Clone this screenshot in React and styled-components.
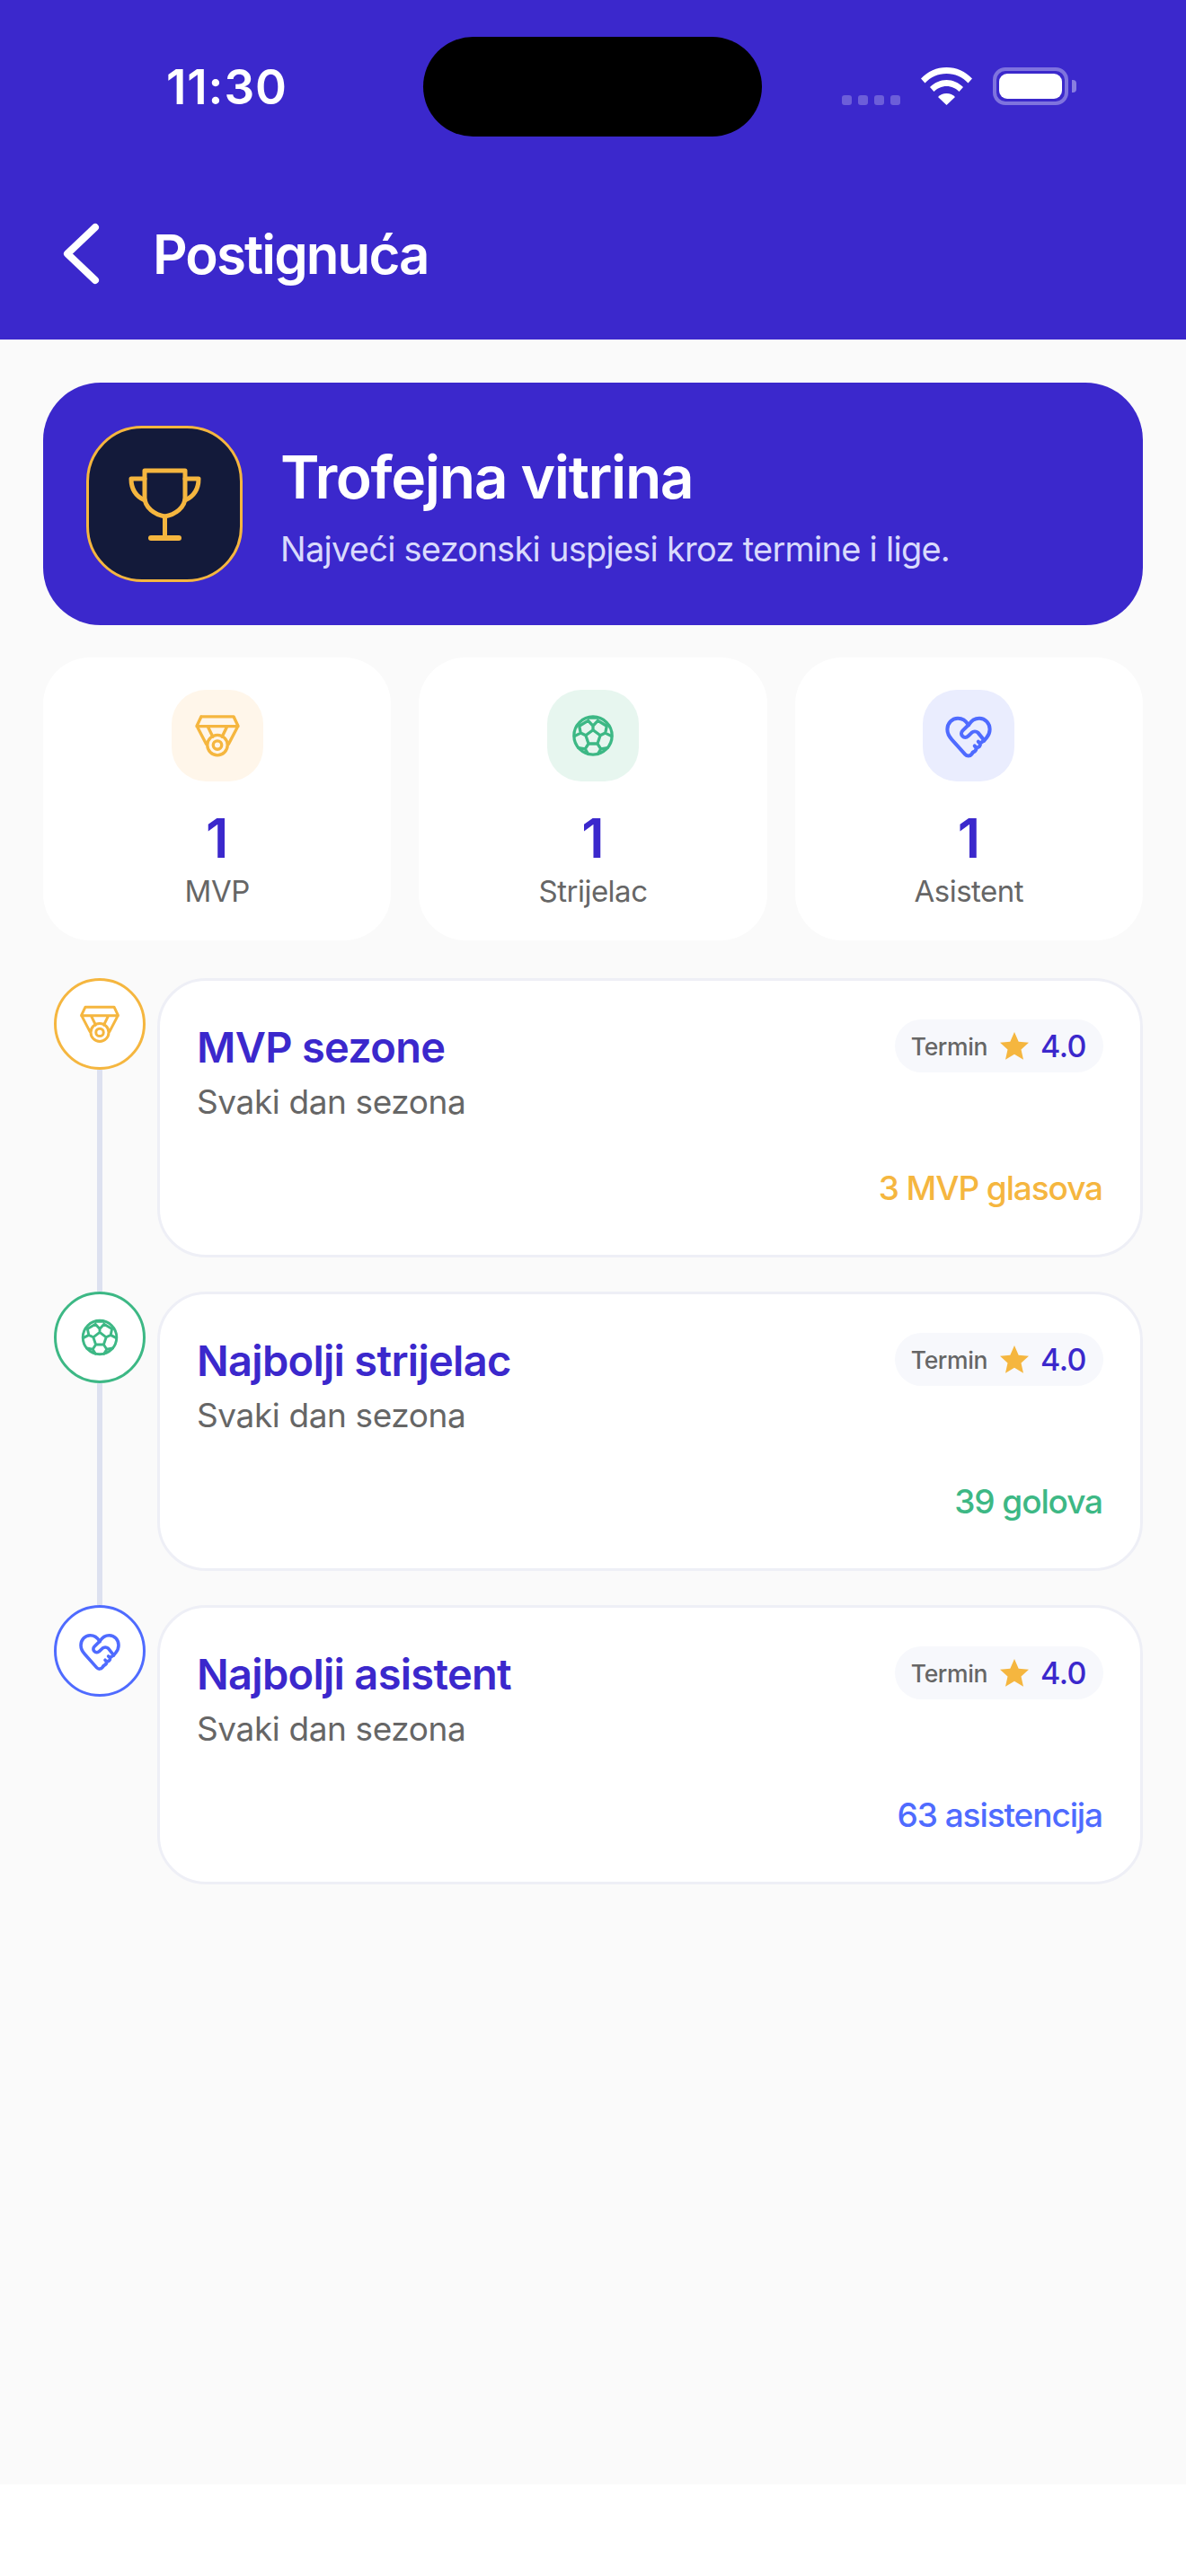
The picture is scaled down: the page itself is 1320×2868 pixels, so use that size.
import React from "react";
import styled, { createGlobalStyle } from "styled-components";

const FONT = `Inter, "Noto Sans", sans-serif`;
const INDIGO = "#3B28CC";
const AMBER = "#F5B63F";
const GREEN = "#3DB885";
const BLUE = "#4F6BFF";

const Global = createGlobalStyle`
  html, body { margin: 0; padding: 0; background: #fff; }
  * { box-sizing: border-box; }
`;

const Screen = styled.div`
  width: 1320px;
  height: 2868px;
  background: #fff;
  font-family: ${FONT};
  overflow: hidden;
`;
const Header = styled.header`
  height: 378px;
  background: ${INDIGO};
  padding-top: 41px;
`;
const StatusBar = styled.div`
  display: flex;
  align-items: flex-start;
  height: 111px;
  padding-left: 185px;
`;
const Clock = styled.div`
  width: 286px;
  margin-top: 29px;
  font-size: 53px;
  line-height: 54px;
  font-weight: 600;
  color: #fff;
  letter-spacing: 0.9px;
`;
const Island = styled.div`
  width: 377px;
  height: 111px;
  border-radius: 56px;
  background: #000;
`;
const StatusIcons = styled.div`
  display: flex;
  align-items: flex-end;
  margin: 34px 0 0 89px;
  height: 42px;
`;
const Dots = styled.div`
  display: flex;
  gap: 7px;
  margin-right: 23px;
`;
const Dot = styled.span`
  width: 11px;
  height: 11px;
  border-radius: 3px;
  background: rgba(255, 255, 255, 0.25);
`;
const Battery = styled.div`
  position: relative;
  width: 84px;
  height: 42px;
  margin-left: 23px;
  border: 4px solid rgba(255, 255, 255, 0.35);
  border-radius: 14px;
  padding: 3px;
  &::after {
    content: "";
    position: absolute;
    right: -13px;
    top: 10px;
    width: 5px;
    height: 14px;
    border-radius: 0 4px 4px 0;
    background: rgba(255, 255, 255, 0.4);
  }
`;
const BatteryFill = styled.div`
  width: 100%;
  height: 100%;
  border-radius: 9px;
  background: #fff;
`;
const NavRow = styled.div`
  display: flex;
  align-items: center;
  height: 70px;
  margin-top: 96px;
  padding-left: 70px;
  gap: 59px;
`;
const NavTitle = styled.h1`
  margin: 0;
  font-size: 60px;
  line-height: 70px;
  font-weight: 600;
  color: #fff;
  letter-spacing: -1.9px;
`;
const Main = styled.main`
  height: 2388px;
  background: #fafafa;
  padding: 48px 48px 0;
`;
const Hero = styled.section`
  display: flex;
  align-items: center;
  gap: 42px;
  height: 270px;
  padding-left: 48px;
  border-radius: 64px;
  background: ${INDIGO};
`;
const HeroIcon = styled.div`
  display: flex;
  align-items: center;
  justify-content: center;
  width: 174px;
  height: 174px;
  border-radius: 62px;
  border: 3px solid ${AMBER};
  background: #131a3a;
`;
const HeroTitle = styled.h2`
  margin: 4px 0 0;
  font-size: 66px;
  line-height: 78px;
  font-weight: 600;
  color: #fff;
  letter-spacing: -1.4px;
`;
const HeroSub = styled.p`
  margin: 18px 0 0;
  font-size: 38px;
  line-height: 46px;
  font-weight: 400;
  color: #d9dafc;
  letter-spacing: -0.75px;
`;
const Stats = styled.section`
  display: grid;
  grid-template-columns: repeat(3, 1fr);
  gap: 31px;
  margin-top: 36px;
`;
const StatCard = styled.div`
  display: flex;
  flex-direction: column;
  align-items: center;
  height: 315px;
  padding-top: 36px;
  border-radius: 52px;
  background: #fff;
`;
const StatTile = styled.div`
  display: flex;
  align-items: center;
  justify-content: center;
  width: 102px;
  height: 102px;
  border-radius: 38px;
  background: ${(p) => p.$bg};
  color: ${(p) => p.$color};
`;
const StatNumber = styled.div`
  margin-top: 27px;
  font-size: 60px;
  line-height: 72px;
  font-weight: 600;
  color: ${INDIGO};
`;
const StatLabel = styled.div`
  margin-top: 3px;
  font-size: 33px;
  line-height: 40px;
  color: #666;
  letter-spacing: -0.5px;
`;
const Timeline = styled.section`
  display: flex;
  flex-direction: column;
  margin-top: 42px;
`;
const Row = styled.div`
  display: flex;
  gap: 13px;
`;
const Rail = styled.div`
  display: flex;
  flex-direction: column;
  align-items: center;
  width: 102px;
  margin-left: 12px;
  flex: none;
`;
const Node = styled.div`
  display: flex;
  align-items: center;
  justify-content: center;
  flex: none;
  width: 102px;
  height: 102px;
  border-radius: 50%;
  border: 3px solid ${(p) => p.$color};
  background: #fff;
  color: ${(p) => p.$color};
`;
const RailLine = styled.div`
  flex: 1;
  width: 6px;
  background: #dde1f0;
`;
const Card = styled.article`
  flex: 1;
  display: flex;
  flex-direction: column;
  height: 311px;
  margin-bottom: ${(p) => (p.$last ? 0 : "38px")};
  padding: 42px 41px 0 41px;
  border: 3px solid #eeeff6;
  border-radius: 54px;
  background: #fff;
`;
const CardTop = styled.div`
  display: flex;
  justify-content: space-between;
  align-items: flex-start;
`;
const CardTitle = styled.h3`
  margin: 2px 0 0;
  font-size: 47px;
  line-height: 60px;
  font-weight: 600;
  color: ${INDIGO};
  letter-spacing: -0.7px;
`;
const CardSub = styled.p`
  margin: 8px 0 0;
  font-size: 37px;
  line-height: 46px;
  color: #666;
  letter-spacing: -0.4px;
`;
const Pill = styled.div`
  display: flex;
  align-items: center;
  height: 59px;
  margin-top: 1px;
  padding: 0 19px 0 18px;
  border-radius: 30px;
  background: #f7f8fc;
`;
const PillLabel = styled.span`
  font-size: 26.5px;
  font-weight: 500;
  color: #666;
  letter-spacing: -0.4px;
`;
const PillValue = styled.span`
  font-size: 34px;
  font-weight: 500;
  color: ${INDIGO};
  letter-spacing: -0.5px;
`;
const Star = styled.svg`
  width: 32px;
  height: 31px;
  margin: 0 13px 0 14px;
`;
const CardFoot = styled.div`
  margin-top: auto;
  margin-bottom: 51px;
  margin-right: 1px;
  text-align: right;
  font-size: 37px;
  line-height: 46px;
  font-weight: 500;
  color: ${(p) => p.$color};
  letter-spacing: -1.1px;
`;

const MedalIcon = ({ size }) => (
  <svg width={size} height={size} viewBox="0 0 24 24" fill="none" stroke="currentColor" strokeWidth="1.5" strokeLinejoin="round" strokeLinecap="round">
    <path d="M4 2.6h16l2.2 4.6-4.7 9M6.5 16.2 1.8 7.2 4 2.6M1.8 7.4h20.4M7.2 7.4l2.5 5.2M16.8 7.4l-2.500 5.2" />
    <circle cx="12" cy="16.7" r="5" />
    <circle cx="12" cy="16.7" r="2.1" />
  </svg>
);

const BallIcon = ({ size }) => (
  <svg width={size} height={size} viewBox="0 0 24 24" fill="none" stroke="currentColor" strokeWidth="1.45" strokeLinejoin="round" strokeLinecap="round">
    <circle cx="12" cy="12" r="9.4" />
    <path d="M12 9.2l3.6 2.7-1.4 4.1H9.8l-1.4-4.1zM12 9.2V7.2L9.6 4.6M12 7.2l2.4-2.6M9.8 3.2h4.4M15.6 11.9l2.5-1.2.7-3.4M18.1 10.7l3.1 1.6M8.4 11.9l-2.5-1.2-.7-3.4M5.9 10.7l-3.1 1.6M14.2 16l1.7 2.6-1.5 2.5M15.9 18.6l3.4-.6M9.8 16l-1.7 2.6 1.5 2.5M8.1 18.6l-3.4-.6M9.6 4.6l-4 2.4M14.4 4.6l4 2.4" />
  </svg>
);

const HeartIcon = ({ size }) => (
  <svg width={size} height={size} viewBox="0 0 24 24" fill="none" stroke="currentColor" strokeWidth="1.8" strokeLinejoin="round" strokeLinecap="round">
    <path d="M12 6.7C10.7 4.6 8.7 3.4 6.7 3.4 3.7 3.4 1.5 5.9 1.5 8.9c0 2 .9 3.6 2.2 5l6.6 7.4c.9 1 2.4 1 3.2-.1l.6-.8" />
    <path d="M12 6.7c1.3-2.1 3.3-3.3 5.3-3.3 3 0 5.2 2.5 5.2 5.500 0 1.7-.7 3.1-1.7 4.3l-1.2 1.3" />
    <path d="M12 6.7 9 9.6a1.9 1.9 0 0 0 2.7 2.7l1.8-1.7c.9-.8 2.3-.8 3.2 0l3.1 3.8" />
    <path d="M19.6 14.4l-1.9 1.5-.9-.9M17.7 15.9c.3 1.2-.6 2.1-1.9 2l-.8-.8M15.8 17.9c.2 1.100-.5 1.9-1.7 2.4" />
  </svg>
);

const Trophy = () => (
  <svg width="81" height="81" viewBox="0 0 81 81" fill="none" stroke={AMBER} strokeWidth="5" strokeLinejoin="round" strokeLinecap="round">
    <path d="M18 3h45v30c0 11-11 19-22.5 21C29 52 18 44 18 33z" />
    <path d="M40.5 54v24" />
    <path d="M25 78h31" strokeWidth="6" />
    <path d="M18 12H3c0 10 4 19 15 24M63 12h15c0 10-4 19-15 24" />
  </svg>
);

const ACHIEVEMENTS = [
  { title: "MVP sezone", foot: "3 MVP glasova", color: AMBER, Icon: MedalIcon },
  { title: "Najbolji strijelac", foot: "39 golova", color: GREEN, Icon: BallIcon },
  { title: "Najbolji asistent", foot: "63 asistencija", color: BLUE, Icon: HeartIcon },
];

const STATS = [
  { label: "MVP", color: AMBER, bg: "#FFF6EA", Icon: MedalIcon },
  { label: "Strijelac", color: GREEN, bg: "#E7F6EF", Icon: BallIcon },
  { label: "Asistent", color: BLUE, bg: "#EAEDFE", Icon: HeartIcon },
];

export default function App() {
  return (
    <Screen>
      <Global />
      <Header>
        <StatusBar>
          <Clock>11:30</Clock>
          <Island />
          <StatusIcons>
            <Dots>
              <Dot />
              <Dot />
              <Dot />
              <Dot />
            </Dots>
            <svg width="57" height="42" viewBox="0 0 57 42" fill="#fff">
              <path d="M28.5 0C39.5 0 49.5 4.5 57 12.5L52.5 17.5C46.5 11 38 7 28.5 7S10.5 11 4.5 17.5L0 12.5C7.5 4.5 17.5 0 28.5 0Z" />
              <path d="M28.5 14C35.5 14 42 17 47 22L42.5 27C39 23.5 34 21 28.5 21S18 23.5 14.5 27L10 22C15 17 21.5 14 28.5 14Z" />
              <path d="M28.5 29C32.5 29 35.5 30.5 38 33L28.5 42 19 33C21.5 30.5 24.5 29 28.5 29Z" />
            </svg>
            <Battery>
              <BatteryFill />
            </Battery>
          </StatusIcons>
        </StatusBar>
        <NavRow>
          <svg width="41" height="70" viewBox="0 0 41 70" fill="none" stroke="#fff" strokeWidth="8" strokeLinecap="round" strokeLinejoin="round">
            <path d="M36 5 5 34.5 36 64" />
          </svg>
          <NavTitle>Postignuća</NavTitle>
        </NavRow>
      </Header>
      <Main>
        <Hero>
          <HeroIcon>
            <Trophy />
          </HeroIcon>
          <div>
            <HeroTitle>Trofejna vitrina</HeroTitle>
            <HeroSub>Najveći sezonski uspjesi kroz termine i lige.</HeroSub>
          </div>
        </Hero>
        <Stats>
          {STATS.map(({ label, color, bg, Icon }) => (
            <StatCard key={label}>
              <StatTile $bg={bg} $color={color}>
                <Icon size={54} />
              </StatTile>
              <StatNumber>1</StatNumber>
              <StatLabel>{label}</StatLabel>
            </StatCard>
          ))}
        </Stats>
        <Timeline>
          {ACHIEVEMENTS.map(({ title, foot, color, Icon }, i) => {
            const last = i === ACHIEVEMENTS.length - 1;
            return (
              <Row key={title}>
                <Rail>
                  <Node $color={color}>
                    <Icon size={48} />
                  </Node>
                  {!last && <RailLine />}
                </Rail>
                <Card $last={last}>
                  <CardTop>
                    <div>
                      <CardTitle>{title}</CardTitle>
                      <CardSub>Svaki dan sezona</CardSub>
                    </div>
                    <Pill>
                      <PillLabel>Termin</PillLabel>
                      <Star viewBox="0 0 32 31">
                        <path fill={AMBER} d="M16 0l4.7 10.7 11.3 1.1-8.5 7.6 2.5 11.3L16 24.8 6 30.7l2.5-11.3L0 11.8l11.3-1.1z" />
                      </Star>
                      <PillValue>4.0</PillValue>
                    </Pill>
                  </CardTop>
                  <CardFoot $color={color}>{foot}</CardFoot>
                </Card>
              </Row>
            );
          })}
        </Timeline>
      </Main>
    </Screen>
  );
}
